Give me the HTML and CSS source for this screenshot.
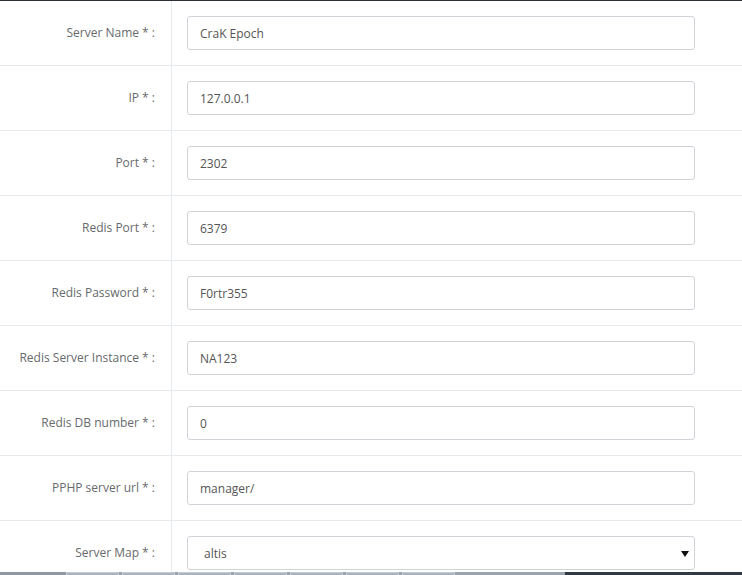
FILE: index.html
```html
<!DOCTYPE html>
<html>
<head>
<meta charset="utf-8">
<link rel="stylesheet" href="styles.css">
</head>
<body>
<div class="page">
  <form class="form">
    <div class="row"><label class="lbl">Server Name * :</label><div class="cell"><input class="ctl" type="text" value="CraK Epoch"></div></div>
    <div class="row"><label class="lbl">IP * :</label><div class="cell"><input class="ctl" type="text" value="127.0.0.1"></div></div>
    <div class="row"><label class="lbl">Port * :</label><div class="cell"><input class="ctl" type="text" value="2302"></div></div>
    <div class="row"><label class="lbl">Redis Port * :</label><div class="cell"><input class="ctl" type="text" value="6379"></div></div>
    <div class="row"><label class="lbl">Redis Password * :</label><div class="cell"><input class="ctl" type="text" value="F0rtr355"></div></div>
    <div class="row"><label class="lbl">Redis Server Instance * :</label><div class="cell"><input class="ctl" type="text" value="NA123"></div></div>
    <div class="row"><label class="lbl">Redis DB number * :</label><div class="cell"><input class="ctl" type="text" value="0"></div></div>
    <div class="row"><label class="lbl">PPHP server url * :</label><div class="cell"><input class="ctl" type="text" value="manager/"></div></div>
    <div class="row"><label class="lbl">Server Map * :</label><div class="cell"><div class="selwrap"><select class="ctl sel"><option>altis</option></select></div></div></div>
  </form>
</div>
<div class="taskbar">
  <div class="tb-left"></div>
  <div class="tb-btns">
    <span class="tb-btn"></span><span class="tb-btn"></span><span class="tb-btn"></span><span class="tb-btn"></span><span class="tb-btn"></span><span class="tb-btn"></span><span class="tb-btn"></span>
  </div>
  <div class="tb-mid"></div>
  <div class="tb-dark"></div>
</div>
</body>
</html>
```
FILE: styles.css
```css
html, body {
  margin: 0;
  padding: 0;
  background: #ffffff;
}
body {
  font-family: "Open Sans", "Liberation Sans", sans-serif;
  font-size: 12px;
  color: #676a6c;
  width: 742px;
  height: 575px;
  overflow: hidden;
  position: relative;
}
.page {
  border-top: 1px solid #2b3137;
}
.form {
  display: flex;
  flex-direction: column;
}
.row {
  display: grid;
  grid-template-columns: 172px 1fr;
  border-bottom: 1px solid #e7eaec;
}
.lbl {
  display: flex;
  align-items: center;
  justify-content: flex-end;
  padding-right: 16px;
  padding-bottom: 2px;
  border-right: 1px solid #e7eaec;
  color: #676a6c;
  white-space: nowrap;
}
.cell {
  padding: 15px 0 15px 15px;
}
.ctl {
  display: block;
  box-sizing: border-box;
  width: 508px;
  height: 34px;
  margin: 0;
  padding: 7px 12px 7px;
  border: 1px solid #d0d3d7;
  border-radius: 3px;
  background: #fff;
  font-family: "Open Sans", "Liberation Sans", sans-serif;
  font-size: 12px;
  color: #555;
  outline: none;
}
.selwrap {
  position: relative;
  width: 508px;
}
.sel {
  -webkit-appearance: none;
  appearance: none;
  padding-left: 16px;
}
.selwrap::after {
  content: "";
  position: absolute;
  right: 6px;
  top: 15px;
  border-left: 4px solid transparent;
  border-right: 4px solid transparent;
  border-top: 6px solid #111;
}
.taskbar {
  position: absolute;
  left: 0;
  top: 572px;
  width: 742px;
  height: 3px;
  display: flex;
  background: #9aa4ae;
}
.tb-left {
  width: 66px;
  background: #8e98a2;
}
.tb-btns {
  display: flex;
  gap: 3px;
}
.tb-btn {
  width: 51px;
  height: 2px;
  border: 1px solid #c4ccd4;
  border-bottom: none;
  background: #a9b3bd;
}
.tb-mid {
  width: 110px;
  background: #9aa4ae;
}
.tb-dark {
  flex: 1;
  background: #2f3a44;
}
```
